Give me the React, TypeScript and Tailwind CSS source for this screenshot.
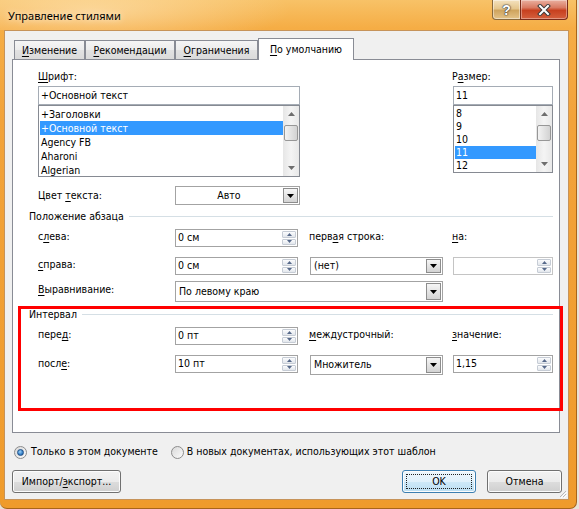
import React from "react";

const UI = "font-['DejaVu_Sans_Condensed','Liberation_Sans',sans-serif] text-[10.5px] text-black";

function K({ children }: { children: React.ReactNode }) {
  return <span className="underline decoration-[1px] underline-offset-[2px]">{children}</span>;
}

function DownTri() {
  return (
    <svg width="7" height="4" viewBox="0 0 7 4">
      <path d="M0 0h7L3.5 4z" fill="#000" />
    </svg>
  );
}

function Combo({ text, className, center }: { text: string; className: string; center?: boolean }) {
  return (
    <div className={`flex items-stretch border border-[#a3a3a3] bg-white ${className}`}>
      <div className={`flex flex-1 items-center px-[3px] ${center ? "justify-center" : ""}`}>{text}</div>
      <div className="m-px flex w-[15px] items-center justify-center border border-[#8d8d8d] bg-gradient-to-b from-[#f6f6f6] to-[#d3d3d3]">
        <DownTri />
      </div>
    </div>
  );
}

function SpinBtn({ up }: { up?: boolean }) {
  return (
    <div className="flex flex-1 items-center justify-center rounded-[1px] border border-[#c6ccd5] bg-gradient-to-b from-[#fbfcfd] to-[#e2e6ec]">
      <svg width="5" height="3" viewBox="0 0 5 3">
        <path d={up ? "M0 3h5L2.5 0z" : "M0 0h5L2.5 3z"} fill="#56698a" />
      </svg>
    </div>
  );
}

function Spin({ value, className, disabled }: { value: string; className: string; disabled?: boolean }) {
  return (
    <div className={`flex border bg-white ${disabled ? "border-[#c4c4c4]" : "border-[#a3a3a3]"} ${className}`}>
      <div className="flex flex-1 items-center pl-[2px]">{value}</div>
      <div className="m-px flex w-[14px] flex-col gap-px">
        <SpinBtn up />
        <SpinBtn />
      </div>
    </div>
  );
}

function ScrollArrow({ up }: { up?: boolean }) {
  return (
    <div className="flex h-[16px] items-center justify-center">
      <svg width="7" height="4" viewBox="0 0 7 4">
        <path d={up ? "M0 4h7L3.5 0z" : "M0 0h7L3.5 4z"} fill="#6e6e6e" />
      </svg>
    </div>
  );
}

function VScroll() {
  return (
    <div className="flex w-[16px] flex-col bg-gradient-to-r from-[#e6e6e6] via-[#f4f4f4] to-[#e8e8e8]">
      <ScrollArrow up />
      <div className="flex-1">
        <div className="mx-px mt-[3px] flex h-[16px] items-center justify-center rounded-[2px] border border-[#979797] bg-gradient-to-r from-[#f3f3f3] to-[#d2d2d2]" />
      </div>
      <ScrollArrow />
    </div>
  );
}

function ListBox({
  items,
  selected,
  className,
  rowClass,
}: {
  items: string[];
  selected: number;
  className: string;
  rowClass: string;
}) {
  return (
    <div className={`flex border border-[#868a92] bg-white ${className}`}>
      <div className="flex-1 overflow-hidden pl-px pt-px">
        {items.map((it, i) => (
          <div key={it} className={`pl-[1px] ${rowClass} ${i === selected ? "bg-[#3399ff] text-white" : ""}`}>
            {it}
          </div>
        ))}
      </div>
      <VScroll />
    </div>
  );
}

function Radio({ checked }: { checked?: boolean }) {
  return (
    <span className="flex h-[13px] w-[13px] items-center justify-center rounded-full border border-[#8c8c8c] bg-gradient-to-br from-[#d9d9d9] to-[#fbfbfb]">
      {checked && (
        <span className="h-[7px] w-[7px] rounded-full border border-[#1e4f86] bg-[radial-gradient(circle_at_40%_35%,#9fd2f7_0%,#3b86cc_55%,#1a5497_100%)]" />
      )}
    </span>
  );
}

function Btn({ children, className, def }: { children: React.ReactNode; className: string; def?: boolean }) {
  return (
    <div
      className={`relative flex h-[23px] items-center justify-center rounded-[3px] border shadow-[inset_0_0_0_1px_#fcfcfc] ${
        def
          ? "border-[#3c7fb1] bg-[linear-gradient(180deg,#eef7fd_0%,#e0f1fb_50%,#cfe9f8_50%,#bcdff3_100%)]"
          : "border-[#707070] bg-[linear-gradient(180deg,#f2f2f2_0%,#ebebeb_50%,#dddddd_50%,#cfcfcf_100%)]"
      } ${className}`}
    >
      {def && <span className="absolute inset-[3px] border border-dotted border-[#222]" />}
      <span className="relative">{children}</span>
    </div>
  );
}

function Tab({ label, className, active }: { label: React.ReactNode; className: string; active?: boolean }) {
  return (
    <div
      className={`flex items-center justify-center border border-b-0 border-[#898c95] ${
        active
          ? "relative z-10 -mb-px h-[22px] bg-white"
          : "h-[19px] bg-[linear-gradient(180deg,#f5f5f5_0%,#ececec_50%,#e2e2e2_50%,#dadada_100%)] pt-px"
      } ${className}`}
    >
      {label}
    </div>
  );
}

function GroupHeader({ title }: { title: string }) {
  return (
    <div className="ml-[16px] mr-[6px] flex h-[14px] items-center">
      <span className="leading-[14px]">{title}</span>
      <div className="ml-[5px] h-px flex-1 bg-[#d5dfe5]" />
    </div>
  );
}

function Label({ children, className }: { children: React.ReactNode; className: string }) {
  return <div className={`leading-[15px] ${className}`}>{children}</div>;
}

function CaptionButtons() {
  return (
    <div className="mr-[8px] flex self-start">
      <div className="flex h-[20px] w-[29px] items-center justify-center rounded-bl-[4px] border border-t-0 border-[#8a6a3c] bg-[linear-gradient(180deg,#f4e2bf_0%,#e5c68d_45%,#cfa45e_55%,#e4c388_100%)] shadow-[inset_0_0_0_1px_rgba(255,255,255,0.45)]">
        <span className="font-['Liberation_Sans',sans-serif] text-[14px] font-bold leading-none text-white [text-shadow:0_0_1px_#3a3a3a,0_0_1px_#3a3a3a,0_0_2px_#3a3a3a]">
          ?
        </span>
      </div>
      <div className="-ml-px flex h-[20px] w-[48px] items-center justify-center rounded-br-[4px] border border-t-0 border-[#7a2c1a] bg-[linear-gradient(180deg,#eab0a0_0%,#d97a62_40%,#c7401f_55%,#d5603e_100%)] shadow-[inset_0_0_0_1px_rgba(255,255,255,0.35)]">
        <svg width="14" height="12" viewBox="0 0 14 12">
          <path d="M3 2l8 8M11 2l-8 8" stroke="#3b3b3b" strokeWidth="4" strokeLinecap="square" />
          <path d="M3 2l8 8M11 2l-8 8" stroke="#ffffff" strokeWidth="2" strokeLinecap="square" />
        </svg>
      </div>
    </div>
  );
}

export default function App() {
  return (
    <div className={`relative h-[509px] w-[579px] overflow-hidden bg-[#e9e2d6] ${UI}`}>
      <div className="flex h-[509px] w-[577px] flex-col rounded-b-[7px] border-r border-b border-[#a8651a] bg-[linear-gradient(180deg,#f8c267_0%,#f5ad45_28px,#f2a33a_120px,#ef9b2c_100%)]">
        {/* caption */}
        <div className="flex h-[30px] items-start justify-between bg-[radial-gradient(ellipse_200px_40px_at_90px_10px,rgba(255,236,200,0.55),transparent)]">
          <div className="pl-[8px] pt-[7px] font-['Noto_Sans','Liberation_Sans',sans-serif] text-[11px] leading-[17px] text-black [text-shadow:0_0_6px_rgba(255,255,255,0.9)]">
            Управление стилями
          </div>
          <CaptionButtons />
        </div>

        {/* client area */}
        <div className="relative ml-[4px] flex h-[470px] w-[565px] flex-col border border-[#c6935a] bg-[#f0f0f0]">
          {/* tabs */}
          <div className="ml-[9px] mt-[7px] flex h-[21px] items-end">
            <Tab className="w-[71px]" label={<span><K>И</K>зменение</span>} />
            <Tab className="w-[90px]" label={<span><K>Р</K>екомендации</span>} />
            <Tab className="w-[83px]" label={<span><K>О</K>граничения</span>} />
            <Tab className="w-[96px]" active label={<span><K>П</K>о умолчанию</span>} />
          </div>

          {/* tab page */}
          <div className="ml-[7px] flex h-[374px] w-[548px] flex-col border border-[#898c95] bg-white">
            <div className="mt-[9px] flex">
              <div className="ml-[25px] flex w-[262px] flex-col">
                <div className="h-[14px] leading-[14px]"><K>Ш</K>рифт:</div>
                <div className="mt-[3px] flex h-[19px] items-center border border-[#a5acb5] pl-[2px]">+Основной текст</div>
                <ListBox
                  className="h-[72px]"
                  rowClass="h-[14px] leading-[14px]"
                  selected={1}
                  items={["+Заголовки", "+Основной текст", "Agency FB", "Aharoni", "Algerian"]}
                />
              </div>
              <div className="ml-[153px] flex w-[100px] flex-col">
                <div className="-ml-px h-[14px] leading-[14px]">Р<K>а</K>змер:</div>
                <div className="mt-[3px] flex h-[19px] items-center border border-[#a5acb5] pl-[2px]">11</div>
                <ListBox
                  className="h-[68px]"
                  rowClass="h-[13px] leading-[13px]"
                  selected={3}
                  items={["8", "9", "10", "11", "12"]}
                />
              </div>
            </div>

            <div className="ml-[25px] mt-[9px] flex items-center">
              <div className="w-[137px]">Цвет <K>т</K>екста:</div>
              <Combo className="h-[19px] w-[125px]" text="Авто" center />
            </div>

            <div className="mt-[4px]">
              <GroupHeader title="Положение абзаца" />
            </div>

            <div className="ml-[25px] mt-[6px] flex h-[18px] items-start">
              <Label className="w-[137px]">с<K>л</K>ева:</Label>
              <Spin className="h-[18px] w-[123px]" value="0 см" />
              <Label className="ml-[11px] w-[143px]">перв<K>а</K>я строка:</Label>
              <Label className="w-[100px]"><K>н</K>а:</Label>
            </div>

            <div className="ml-[25px] mt-[10px] flex h-[18px] items-start">
              <Label className="w-[137px]"><K>с</K>права:</Label>
              <Spin className="h-[18px] w-[123px]" value="0 см" />
              <Combo className="ml-[12px] h-[18px] w-[133px]" text="(нет)" />
              <Spin className="ml-[10px] h-[18px] w-[100px]" value="" disabled />
            </div>

            <div className="ml-[25px] mt-[6px] flex h-[21px] items-start">
              <Label className="w-[137px] pt-px"><K>В</K>ыравнивание:</Label>
              <Combo className="h-[21px] w-[268px]" text="По левому краю" />
            </div>

            <div className="mt-[5px]">
              <GroupHeader title="Интервал" />
            </div>

            <div className="ml-[25px] mt-[6px] flex h-[18px] items-start">
              <Label className="w-[137px]">пере<K>д</K>:</Label>
              <Spin className="h-[18px] w-[123px]" value="0 пт" />
              <Label className="ml-[11px] w-[143px]"><K>м</K>еждустрочный:</Label>
              <Label className="w-[100px]"><K>з</K>начение:</Label>
            </div>

            <div className="ml-[25px] mt-[10px] flex h-[20px] items-start">
              <Label className="w-[137px] pt-px">посл<K>е</K>:</Label>
              <Spin className="h-[18px] w-[123px]" value="10 пт" />
              <Combo className="ml-[12px] h-[20px] w-[133px]" text="Множитель" />
              <Spin className="ml-[10px] h-[18px] w-[100px]" value="1,15" />
            </div>
          </div>

          {/* scope */}
          <div className="ml-[9px] mt-[12px] flex h-[14px] items-center">
            <Radio checked />
            <span className="ml-[4px]">Только в этом документе</span>
            <span className="ml-[13px]">
              <Radio />
            </span>
            <span className="ml-[3px]">В новых документах, использующих этот шаблон</span>
          </div>

          {/* command buttons */}
          <div className="ml-[7px] mr-[6px] mt-[11px] flex items-center justify-between">
            <Btn className="w-[109px]">Импорт/<K>э</K>кспорт...</Btn>
            <div className="flex gap-[11px]">
              <Btn className="w-[74px]" def>OK</Btn>
              <Btn className="w-[75px]">Отмена</Btn>
            </div>
          </div>

          {/* size grip */}
          <svg className="absolute bottom-[1px] right-[1px]" width="9" height="9" viewBox="0 0 9 9">
            <path d="M8 2L2 8M8 5L5 8" stroke="#b8b8b8" strokeWidth="1" />
            <path d="M9 3L3 9M9 6L6 9" stroke="#ffffff" strokeWidth="1" />
          </svg>
        </div>
      </div>

      {/* red highlight frame */}
      <div className="pointer-events-none absolute left-[18px] top-[306px] h-[105px] w-[545px] border-[3px] border-[#ff0000]" />
    </div>
  );
}
